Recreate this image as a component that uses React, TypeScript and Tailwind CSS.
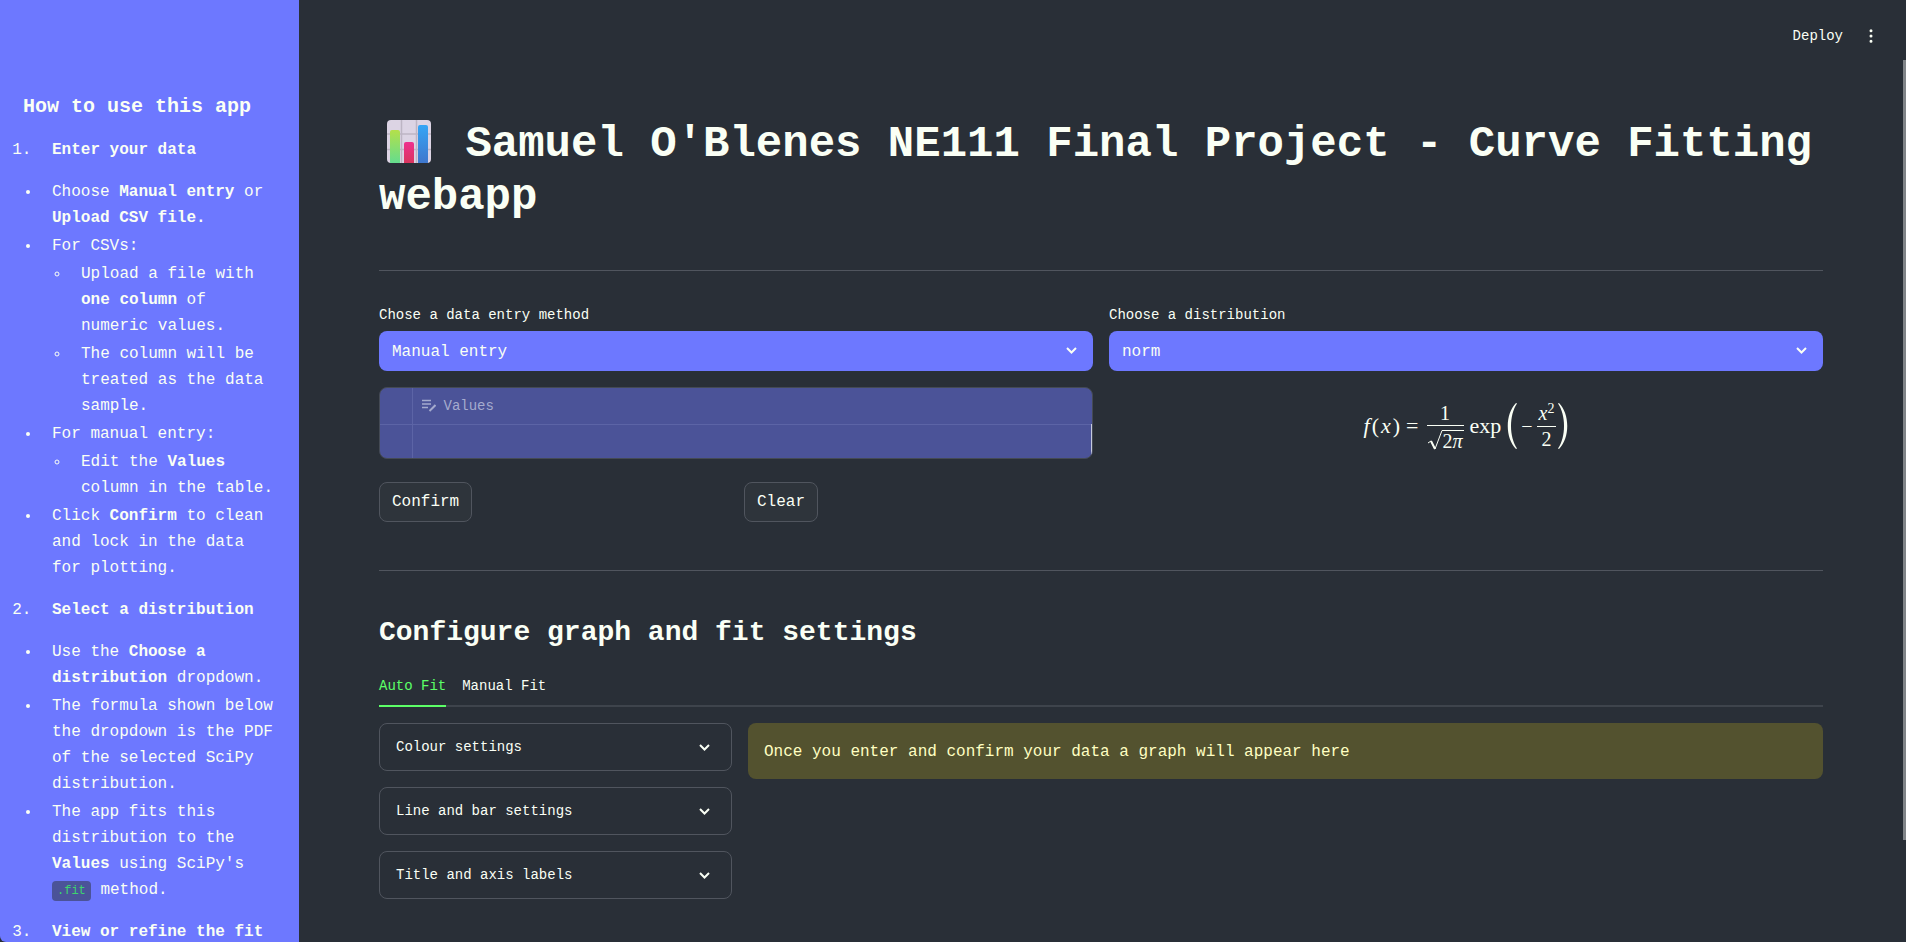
import React, { useState } from 'react';
import { MoreVertical } from 'lucide-react';

const ChevronDown: React.FC<{ className?: string }> = ({ className = '' }) => (
  <svg viewBox="0 0 11 7" className={`w-[11px] h-[7px] shrink-0 ${className}`} fill="none" stroke="currentColor" strokeWidth="2">
    <path d="M1 1 L5.500 5.500 L10 1" />
  </svg>
);

const ChartEmoji: React.FC = () => (
  <svg viewBox="0 0 60 44" className="inline-block w-[60px] h-[44px] align-[-8px]" role="img" aria-label="Bar chart">
    <defs>
      <linearGradient id="green" x1="0" y1="0" x2="0" y2="1">
        <stop offset="0" stopColor="#b4e04a" />
        <stop offset="1" stopColor="#62dc90" />
      </linearGradient>
      <linearGradient id="red" x1="0" y1="0" x2="0" y2="1">
        <stop offset="0" stopColor="#ee2f8e" />
        <stop offset="1" stopColor="#d8365c" />
      </linearGradient>
      <linearGradient id="blue" x1="0" y1="0" x2="0" y2="1">
        <stop offset="0" stopColor="#35a5f5" />
        <stop offset="1" stopColor="#3f76cc" />
      </linearGradient>
      <clipPath id="card">
        <rect x="8" y="0" width="44" height="43" rx="4" />
      </clipPath>
    </defs>
    <g clipPath="url(#card)">
      <rect x="8" y="0" width="44" height="43" fill="#dcd4e4" />
      <path d="M22.500 0V43M37.500 0V43M8 14H52M8 29.500H52" stroke="#bdb5c4" strokeWidth="1.500" />
      <path d="M11 44V12Q11 10 13 10H19Q21 10 21 12V44Z" fill="url(#green)" />
      <path d="M25 44V24Q25 22 27 22H33Q35 22 35 24V44Z" fill="url(#red)" />
      <path d="M39 44V7Q39 5 41 5H47Q49 5 49 7V44Z" fill="url(#blue)" />
    </g>
  </svg>
);

interface SelectBoxProps {
  id: string;
  label: string;
  options: string[];
}

const SelectBox: React.FC<SelectBoxProps> = ({ id, label, options }) => (
  <div className="flex flex-col gap-1">
    <label htmlFor={id} className="text-sm leading-6">{label}</label>
    <div className="relative">
      <select id={id} className="w-full h-10 appearance-none rounded-lg bg-[#6d78ff] pt-[2px] pl-[13px] pr-8 text-base outline-none">
        {options.map((option) => (
          <option key={option}>{option}</option>
        ))}
      </select>
      <ChevronDown className="pointer-events-none absolute right-4 top-4" />
    </div>
  </div>
);

const EditIcon: React.FC = () => (
  <svg viewBox="0 0 14 13" className="w-[14px] h-[13px] shrink-0" fill="none" stroke="currentColor" strokeWidth="1.500">
    <path d="M0 1.500H9M0 5H9M0 8.500H6" />
    <path d="M7.500 12L13.500 6" strokeWidth="2" />
  </svg>
);

const ValuesTable: React.FC = () => (
  <div className="overflow-hidden rounded-lg border border-[#444a54] bg-[#4b5398]">
    <table className="w-full table-fixed border-collapse">
      <colgroup>
        <col className="w-8" />
        <col />
      </colgroup>
      <thead>
        <tr className="h-9 border-b border-[#5c64a6]">
          <th className="border-r border-[#5c64a6]" aria-label="Row" />
          <th className="px-[9px] text-left text-sm font-normal text-[#a5abce]">
            <span className="flex items-center gap-2">
              <EditIcon />
              Values
            </span>
          </th>
        </tr>
      </thead>
      <tbody>
        <tr className="h-[34px]">
          <td className="border-r border-[#5c64a6]" />
          <td className="border-r border-[#c5c9dd]" />
        </tr>
      </tbody>
    </table>
  </div>
);

const Formula: React.FC = () => (
  <div className="flex items-center justify-center pt-[14px] font-['Liberation_Serif',serif] text-xl leading-6">
    <span className="flex gap-[2px] text-[22px]"><i>f</i><span>(</span><i>x</i><span>)</span></span>
    <span className="pl-[6px] pr-2 text-[22px]">=</span>
    <span className="flex flex-col items-center">
      <span>1</span>
      <span className="flex items-start border-t border-current pt-1">
        <svg viewBox="0 0 16 20" className="h-5 w-4" fill="none" stroke="currentColor">
          <path d="M1 13L4 11L8 19L15 0.500H16" />
          <path d="M4 11L8 19" strokeWidth="2" />
        </svg>
        <span className="border-t border-current pr-px leading-5">2<i>π</i></span>
      </span>
    </span>
    <span className="pl-[6px] text-[22px]">exp</span>
    <svg viewBox="0 0 10 48" className="ml-[6px] h-12 w-[10px]" fill="currentColor">
      <path d="M9 1C-2 12 -2 36 9 47L10 46.500C2 35 2 13 10 1.500Z" />
    </svg>
    <span className="px-1">−</span>
    <span className="flex flex-col items-center">
      <span className="border-b border-current px-[2px] pb-px"><i>x</i><sup className="text-sm leading-none">2</sup></span>
      <span>2</span>
    </span>
    <svg viewBox="0 0 10 48" className="ml-[2px] h-12 w-[10px]" fill="currentColor">
      <path d="M1 1C12 12 12 36 1 47L0 46.500C8 35 8 13 0 1.500Z" />
    </svg>
  </div>
);

const Sidebar: React.FC = () => (
  <aside className="w-[299px] shrink-0 overflow-hidden rounded-bl-md bg-[#6d78ff] pt-[95px] px-[23px]">
    <h3 className="text-xl font-bold leading-6">How to use this app</h3>
    <div className="mt-[18px] flex flex-col gap-4 leading-[26px]">
      <ol start={1} className="list-decimal pl-[18px]"><li className="pl-[11px]"><b>Enter your data</b></li></ol>
      <ul className="flex list-disc flex-col gap-[2px] pl-[18px]">
        <li className="pl-[11px]">Choose <b>Manual entry</b> or <b>Upload CSV file.</b></li>
        <li className="pl-[11px]">
          For CSVs:
          <ul className="mt-[2px] flex list-[circle] flex-col gap-[2px] pl-[18px]">
            <li className="pl-[11px]">Upload a file with <b>one column</b> of numeric values.</li>
            <li className="pl-[11px]">The column will be treated as the data sample.</li>
          </ul>
        </li>
        <li className="pl-[11px]">
          For manual entry:
          <ul className="mt-[2px] list-[circle] pl-[18px]">
            <li className="pl-[11px]">Edit the <b>Values</b> column in the table.</li>
          </ul>
        </li>
        <li className="pl-[11px]">Click <b>Confirm</b> to clean and lock in the data for plotting.</li>
      </ul>
      <ol start={2} className="list-decimal pl-[18px]"><li className="pl-[11px]"><b>Select a distribution</b></li></ol>
      <ul className="flex list-disc flex-col gap-[2px] pl-[18px]">
        <li className="pl-[11px]">Use the <b>Choose a distribution</b> dropdown.</li>
        <li className="pl-[11px]">The formula shown below the dropdown is the PDF of the selected SciPy distribution.</li>
        <li className="pl-[11px]">
          The app fits this distribution to the <b>Values</b> using SciPy's{' '}
          <code className="rounded bg-[#4b5398] px-[5px] py-[3px] font-['Liberation_Mono',monospace] text-xs text-[#3dd56d]">.fit</code> method.
        </li>
      </ul>
      <ol start={3} className="list-decimal pl-[18px]"><li className="pl-[11px]"><b>View or refine the fit</b></li></ol>
    </div>
  </aside>
);

const TABS = ['Auto Fit', 'Manual Fit'];
const EXPANDERS = ['Colour settings', 'Line and bar settings', 'Title and axis labels'];

export default function App() {
  const [activeTab, setActiveTab] = useState('Auto Fit');

  return (
    <div className="flex h-screen overflow-hidden bg-[#292f37] font-['Liberation_Mono',monospace] text-base text-[#fafff5]">
      <Sidebar />

      <div className="flex min-w-0 flex-1 flex-col">
        <header className="flex h-[60px] shrink-0 items-center justify-end gap-[18px] pt-3 pr-[25px]">
          <button className="text-sm">Deploy</button>
          <button aria-label="Main menu"><MoreVertical className="h-[18px] w-5" /></button>
        </header>

        <div className="flex min-h-0 flex-1">
          <main className="min-w-0 flex-1 overflow-hidden px-20 pt-[58px]">
            <h1 className="text-[44px] font-bold leading-[53px]">
              <ChartEmoji /> Samuel O'Blenes NE111 Final Project - Curve Fitting webapp
            </h1>
            <hr className="mt-[46px] border-[#50555e]" />

            <div className="mt-8 grid grid-cols-2 gap-4">
              <div className="flex flex-col gap-4">
                <SelectBox id="entry-method" label="Chose a data entry method" options={['Manual entry', 'Upload CSV file']} />
                <ValuesTable />
                <div className="mt-[7px] grid grid-cols-2 gap-4">
                  <div>
                    <button className="h-10 rounded-lg border border-[#50555e] bg-[#2e343b] px-3">Confirm</button>
                  </div>
                  <div>
                    <button className="h-10 rounded-lg border border-[#50555e] bg-[#2e343b] px-3">Clear</button>
                  </div>
                </div>
              </div>
              <div className="flex flex-col gap-4">
                <SelectBox id="distribution" label="Choose a distribution" options={['norm', 'expon', 'gamma']} />
                <Formula />
              </div>
            </div>
            <hr className="mt-12 border-[#50555e]" />

            <h2 className="mt-[45px] text-[28px] font-bold leading-[34px]">Configure graph and fit settings</h2>

            <div role="tablist" className="mt-[17px] flex h-10 gap-4 border-b-2 border-[#3e444c] text-sm">
              {TABS.map((tab) => (
                <button
                  key={tab}
                  role="tab"
                  aria-selected={tab === activeTab}
                  onClick={() => setActiveTab(tab)}
                  className={`-mb-[2px] h-10 border-b-2 ${tab === activeTab ? 'border-[#5cff67] text-[#5cff67]' : 'border-transparent'}`}
                >
                  {tab}
                </button>
              ))}
            </div>

            <div className="mt-4 flex items-start gap-4">
              <div className="flex flex-[1_1_calc(25%-16px)] flex-col gap-4">
                {EXPANDERS.map((title) => (
                  <button key={title} className="flex h-12 items-center justify-between rounded-lg border border-[#50555e] pl-4 pr-[21px] text-left text-sm">
                    {title}
                    <ChevronDown />
                  </button>
                ))}
              </div>
              <div role="alert" className="flex-[1_1_calc(75%-16px)] rounded-lg bg-[#53522f] px-4 pt-[17px] pb-[15px] leading-6 text-[#ffffc2]">
                Once you enter and confirm your data a graph will appear here
              </div>
            </div>
          </main>
          <div className="h-[780px] w-[3px] shrink-0 bg-[#808488]" />
        </div>
      </div>
    </div>
  );
}
